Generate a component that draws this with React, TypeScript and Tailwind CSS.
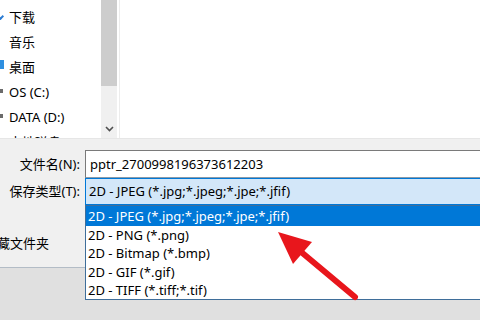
import React from "react";

const navItems = [
  { label: "下载", icon: "down" },
  { label: "音乐", icon: "none" },
  { label: "桌面", icon: "desk" },
  { label: "OS (C:)", icon: "drive" },
  { label: "DATA (D:)", icon: "drive" },
  { label: "本地磁盘 (E:)", icon: "drive" },
];

const options = [
  "2D - JPEG (*.jpg;*.jpeg;*.jpe;*.jfif)",
  "2D - PNG (*.png)",
  "2D - Bitmap (*.bmp)",
  "2D - GIF (*.gif)",
  "2D - TIFF (*.tiff;*.tif)",
];

function NavIcon({ kind }: { kind: string }) {
  if (kind === "down")
    return <span className="absolute left-[-2px] top-[9px] w-[5px] h-[5px] border-b-2 border-r-2 border-[#2b7cd3] rotate-45" />;
  if (kind === "desk")
    return <span className="absolute left-0 top-[5px] w-[4px] h-[9px] bg-[#2f8fe0]" />;
  if (kind === "drive")
    return <span className="absolute left-0 top-[9px] w-[3px] h-[4px] bg-[#6b6b6b]" />;
  return null;
}

export default function App() {
  return (
    <div className="relative w-[480px] h-[320px] overflow-hidden bg-[#f0f0f0] font-['Noto_Sans','Noto_Sans_CJK_SC',sans-serif] text-black">
      {/* top section */}
      <div className="flex h-[139px] bg-white border-b border-[#e6e6e6]">
        <div className="w-[101px] flex flex-col pt-[5px] overflow-hidden">
          {navItems.map((n) => (
            <div key={n.label} className="relative h-[25px] shrink-0 flex items-center pl-[9px] text-[13px] leading-none whitespace-nowrap">
              <NavIcon kind={n.icon} />
              <span>{n.label}</span>
            </div>
          ))}
        </div>
        <div className="w-[16px] flex flex-col bg-[#f0f0f0]">
          <div className="h-[86px] bg-[#cdcdcd]" />
          <div className="flex-1 flex items-end justify-center pb-[6px]">
            <svg width="9" height="6" viewBox="0 0 9 6">
              <path d="M1 1 L4.5 4.5 L8 1" stroke="#505050" strokeWidth="1.6" fill="none" />
            </svg>
          </div>
        </div>
        <div className="flex-1 ml-[2px] border-l border-[#ececec] bg-white" />
      </div>

      {/* bottom section */}
      <div className="flex flex-col h-[181px] text-[13px] leading-none">
        <div className="flex items-stretch mt-[11px] h-[28px]">
          <div className="w-[85px] flex items-center justify-end pr-[5px]">文件名(N):</div>
          <div className="flex-1 mr-[-4px] bg-white border border-[#7a7a7a] border-b-[#8a9aa8] flex items-center pl-[4px]">
            pptr_2700998196373612203
          </div>
        </div>
        <div className="relative flex items-stretch h-[27px]">
          <div className="w-[85px] flex items-center justify-end pr-[5px]">保存类型(T):</div>
          <div className="flex-1 mr-[-4px] bg-[#d3e7f9] border border-[#0078d7] flex items-center pl-[3px]">
            {options[0]}
          </div>
          {/* dropdown list */}
          <div className="absolute left-[85px] right-[-4px] top-full z-10 h-[95px] bg-white border border-[#3f6e9a] flex flex-col">
            {options.map((o, i) => (
              <div
                key={o}
                className={
                  i === 0
                    ? "h-[20px] shrink-0 flex items-center pl-[2px] bg-[#0078d7] text-white"
                    : "h-[18.5px] shrink-0 flex items-center pl-[2px]"
                }
              >
                {o}
              </div>
            ))}
          </div>
        </div>
        <div className="flex items-center h-[62px] pt-[14px] whitespace-nowrap">
          <span className="ml-[-3px]">藏文件夹</span>
        </div>
        <div className="flex-1 bg-[#e0e0e0] border-t border-[#b3bcc6]" />
      </div>

      {/* red arrow annotation */}
      <svg className="absolute inset-0 z-20 pointer-events-none" width="480" height="320" viewBox="0 0 480 320">
        <line x1="300" y1="251" x2="355" y2="297" stroke="#e8161c" strokeWidth="6" strokeLinecap="round" />
        <polygon points="278,232 312,242 293,264" fill="#e8161c" />
      </svg>
    </div>
  );
}
